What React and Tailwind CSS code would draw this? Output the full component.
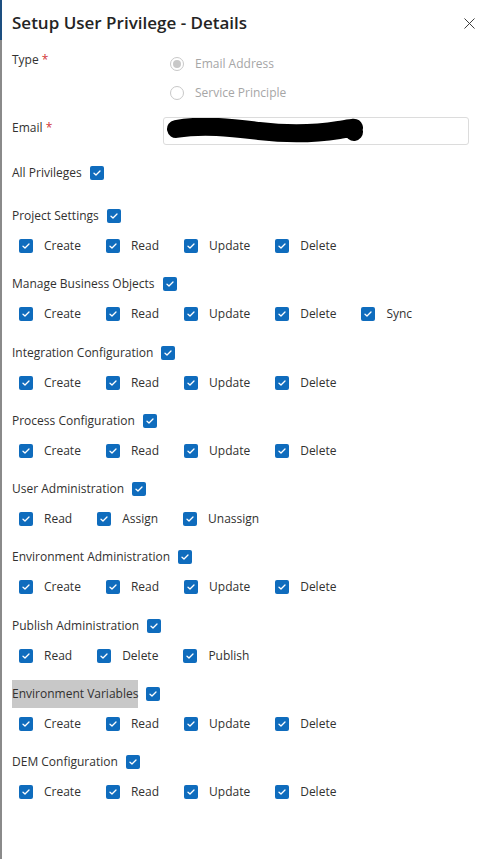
import { X } from 'lucide-react';

const sections = [
  { title: 'Project Settings', items: ['Create', 'Read', 'Update', 'Delete'] },
  { title: 'Manage Business Objects', items: ['Create', 'Read', 'Update', 'Delete', 'Sync'] },
  { title: 'Integration Configuration', items: ['Create', 'Read', 'Update', 'Delete'] },
  { title: 'Process Configuration', items: ['Create', 'Read', 'Update', 'Delete'] },
  { title: 'User Administration', items: ['Read', 'Assign', 'Unassign'] },
  { title: 'Environment Administration', items: ['Create', 'Read', 'Update', 'Delete'] },
  { title: 'Publish Administration', items: ['Read', 'Delete', 'Publish'] },
  { title: 'Environment Variables', items: ['Create', 'Read', 'Update', 'Delete'], highlight: true },
  { title: 'DEM Configuration', items: ['Create', 'Read', 'Update', 'Delete'] },
];

function Check() {
  return (
    <span className="grid h-[14px] w-[14px] shrink-0 place-items-center rounded-[2px] bg-[#0f6cbd]">
      <svg width="8" height="6" viewBox="0 0 8 6" fill="none">
        <path d="M1 3.2 L3 5 L7 1" stroke="white" strokeWidth="1.3" strokeLinecap="round" strokeLinejoin="round" />
      </svg>
    </span>
  );
}

function Radio({ checked, label }) {
  return (
    <div className="flex h-[29px] items-center gap-[11px]">
      <span className="grid h-[14px] w-[14px] place-items-center rounded-full border border-[#c8c8c8] bg-white">
        {checked && <span className="h-[8px] w-[8px] rounded-full bg-[#c8c8c8]" />}
      </span>
      <span className="text-[#a6a6a6]">{label}</span>
    </div>
  );
}

export default function App() {
  return (
    <div className="flex min-h-[859px] w-[477px] bg-white text-[12px] text-[#323130]" style={{ fontFamily: '"Open Sans", "Noto Sans", sans-serif' }}>
      {/* left edge of the panel */}
      <div className="flex w-[2px] shrink-0 flex-col">
        <div className="h-[40px] bg-[#1d4f80]" />
        <div className="flex-1 bg-[#8a8a8a]" />
      </div>

      <div className="flex-1 pl-[10px]">
        {/* Header */}
        <div className="flex h-[46px] items-center justify-between">
          <h1 className="text-[17px] font-semibold text-[#242424]">Setup User Privilege - Details</h1>
          <X size={19} strokeWidth={1.2} className="mr-[-2px] text-[#333]" />
        </div>

        {/* Type */}
        <div className="mt-[3px] flex">
          <div className="w-[158px] pt-[1px] leading-[20px]">
            Type <span className="text-[#d13438]">*</span>
          </div>
          <div className="flex flex-col">
            <Radio checked label="Email Address" />
            <Radio label="Service Principle" />
          </div>
        </div>

        {/* Email */}
        <div className="mt-[10px] flex items-start">
          <div className="w-[151px] pt-[1px] leading-[20px]">
            Email <span className="text-[#d13438]">*</span>
          </div>
          <div className="relative h-[28px] w-[306px] rounded-[3px] border border-[#dcdcdc]">
            <svg className="absolute left-0 top-0" width="306" height="28" viewBox="0 0 306 28">
              <path
                d="M12 11 C 40 6, 70 10, 95 13 S 150 16, 175 12 S 185 10, 190 14"
                stroke="black"
                strokeWidth="18"
                strokeLinecap="round"
                fill="none"
              />
            </svg>
          </div>
        </div>

        {/* All privileges */}
        <div className="mt-[18px] flex h-[20px] items-center gap-[8px]">
          <span>All Privileges</span>
          <Check />
        </div>

        {/* Sections */}
        <div className="mt-[23px]">
          {sections.map((s) => (
            <div key={s.title} className="h-[68.25px]">
              <div className="flex h-[20px] items-center gap-[8px]">
                {s.highlight ? (
                  <span className="-my-[4px] flex h-[28px] items-center bg-[#c8c8c8]">{s.title}</span>
                ) : (
                  <span>{s.title}</span>
                )}
                <Check />
              </div>
              <div className="mt-[10px] flex h-[20px] items-center pl-[7px]">
                {s.items.map((it) => (
                  <div key={it} className="mr-[25px] flex items-center gap-[11px]">
                    <Check />
                    <span>{it}</span>
                  </div>
                ))}
              </div>
            </div>
          ))}
        </div>
      </div>
    </div>
  );
}
